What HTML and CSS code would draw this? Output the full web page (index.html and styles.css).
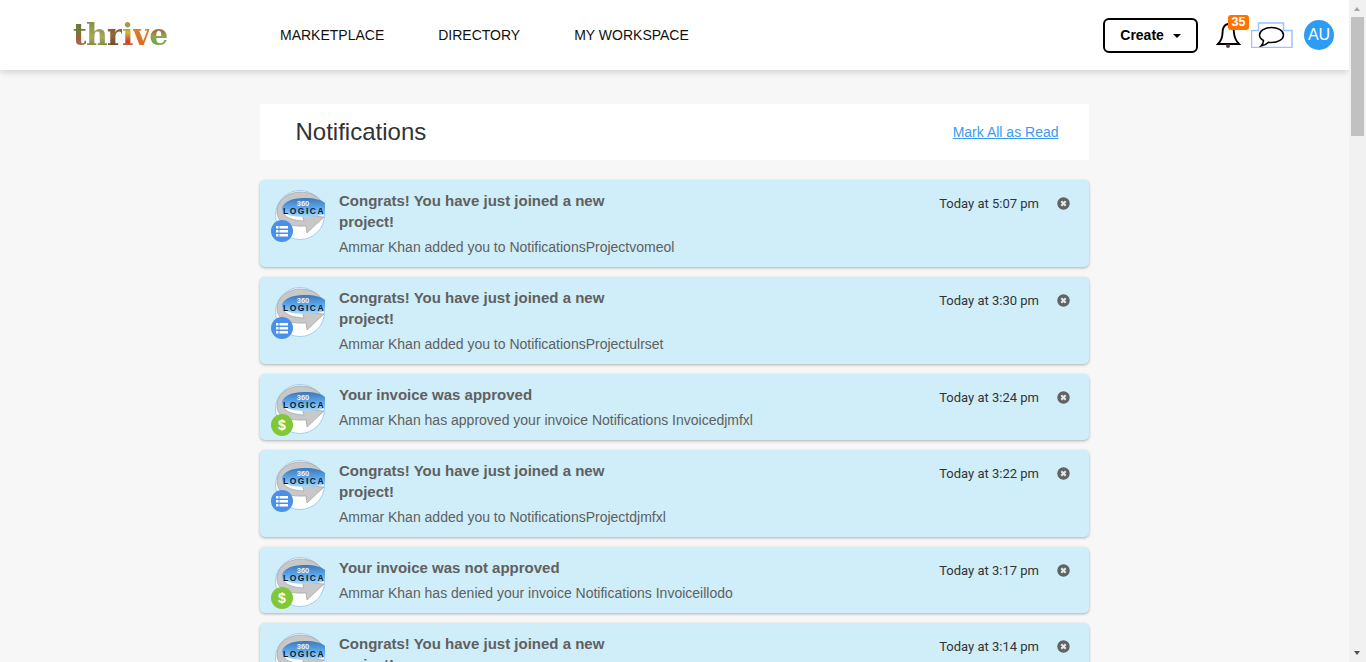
FILE: index.html
```html
<!DOCTYPE html>
<html lang="en">
<head>
    <meta charset="UTF-8">
    <title>Notifications</title>
    <link rel="stylesheet" href="styles.css">
</head>
<body>
    <svg class="sprites" width="0" height="0">
        <defs>
            <linearGradient id="logicaBlue" x1="0" y1="0" x2="0" y2="1">
                <stop offset="0" stop-color="#3a78bb"/>
                <stop offset="0.5" stop-color="#5aa6e8"/>
                <stop offset="1" stop-color="#a8daf9"/>
            </linearGradient>
        </defs>
        <symbol id="logica" viewBox="0 0 50 50">
            <circle cx="25" cy="25" r="24.500" fill="#fff" stroke="#9cc6f2" stroke-width="0.900"/>
            <path d="M2 22C2 11 11 3 24 2C34 2 42 5 47 12L30 10C17 10 9 14 8 20C8 26 14 30 29 31L27 25L49 27L32 43L31 36C14 37 2 33 2 22Z" fill="#c8c8c8" stroke="#8a8a8a" stroke-width="0.500"/>
            <path d="M7 18C8 12 17 8 29 8C40 8 47 10 50 13V24C45 26 38 27 29 27C17 27 7 24 7 18Z" fill="url(#logicaBlue)"/>
        </symbol>
        <symbol id="listIcon" viewBox="0 0 14 12">
            <rect x="1" y="1" width="2.500" height="2.500"/>
            <rect x="1" y="5" width="2.500" height="2.500"/>
            <rect x="1" y="9" width="2.500" height="2.500"/>
            <rect x="4.500" y="1" width="8.500" height="2.500"/>
            <rect x="4.500" y="5" width="8.500" height="2.500"/>
            <rect x="4.500" y="9" width="8.500" height="2.500"/>
        </symbol>
        <symbol id="closeIcon" viewBox="0 0 13 13">
            <circle cx="6.500" cy="6.500" r="6.200" fill="#626262"/>
            <path d="M4.300 4.300L8.700 8.700M8.700 4.300L4.300 8.700" stroke="#dfe9ee" stroke-width="2.200"/>
        </symbol>
    </svg>

    <div class="window">
        <div class="page">
            <header class="topbar">
                <div class="brand"><span class="l1">t</span><span class="l2">h</span><span class="l3">r</span><span class="l4">i</span><span class="l5">v</span><span class="l6">e</span></div>
                <nav class="main-nav">
                    <a>MARKETPLACE</a>
                    <a>DIRECTORY</a>
                    <a>MY WORKSPACE</a>
                </nav>
                <div class="top-actions">
                    <button class="create-btn">Create <span class="caret"></span></button>
                    <div class="bell">
                        <svg width="26" height="28" viewBox="0 0 26 28">
                            <path d="M12 3C7 4 6.500 8 6.500 12C6.500 17 5 20 2 23H23C20 20 18.500 17 18 12C18 8 17 4 12 3Z" fill="#fff" stroke="#000" stroke-width="1.900"/>
                            <circle cx="12" cy="25" r="2" fill="#5a4040"/>
                        </svg>
                        <span class="badge">35</span>
                    </div>
                    <div class="chat">
                        <svg width="42" height="26" viewBox="0 0 42 26">
                            <path d="M7.500 1H32.500V8.500H41V25.500H0.500V8.500H7.500Z" fill="none" stroke="#9cc2fb" stroke-width="1.500"/>
                            <path d="M20.500 5.500C14 5.500 8.500 8.500 8.500 13C8.500 15.500 10.500 17.500 12.500 18.500C12.500 20.500 11.500 22.500 10 24C13.500 23.500 16 22 17.500 20.300C18.500 20.500 19.500 20.500 20.500 20.500C27 20.500 32.500 17.500 32.500 13C32.500 8.500 27 5.500 20.500 5.500Z" fill="#fff" stroke="#000" stroke-width="1.500"/>
                        </svg>
                    </div>
                    <div class="user-chip">AU</div>
                </div>
            </header>

            <main class="content">
                <section class="title-bar">
                    <h1>Notifications</h1>
                    <a class="mark-read">Mark All as Read</a>
                </section>

                <ul class="notice-list">
                    <li class="notice">
                        <div class="thumb">
                            <svg class="avatar" viewBox="0 0 50 50"><use href="#logica"/><text x="28" y="16" class="logo-360">360</text><text x="29" y="24" class="logo-word">LOGICA</text></svg>
                            <span class="type-icon type-project"><svg width="14" height="12"><use href="#listIcon"/></svg></span>
                        </div>
                        <div class="notice-text">
                            <h3>Congrats! You have just joined a new project!</h3>
                            <p>Ammar Khan added you to NotificationsProjectvomeol</p>
                        </div>
                        <span class="notice-time">Today at 5:07 pm</span>
                        <svg class="close-x"><use href="#closeIcon"/></svg>
                    </li>
                    <li class="notice">
                        <div class="thumb">
                            <svg class="avatar" viewBox="0 0 50 50"><use href="#logica"/><text x="28" y="16" class="logo-360">360</text><text x="29" y="24" class="logo-word">LOGICA</text></svg>
                            <span class="type-icon type-project"><svg width="14" height="12"><use href="#listIcon"/></svg></span>
                        </div>
                        <div class="notice-text">
                            <h3>Congrats! You have just joined a new project!</h3>
                            <p>Ammar Khan added you to NotificationsProjectulrset</p>
                        </div>
                        <span class="notice-time">Today at 3:30 pm</span>
                        <svg class="close-x"><use href="#closeIcon"/></svg>
                    </li>
                    <li class="notice">
                        <div class="thumb">
                            <svg class="avatar" viewBox="0 0 50 50"><use href="#logica"/><text x="28" y="16" class="logo-360">360</text><text x="29" y="24" class="logo-word">LOGICA</text></svg>
                            <span class="type-icon type-invoice">$</span>
                        </div>
                        <div class="notice-text">
                            <h3>Your invoice was approved</h3>
                            <p>Ammar Khan has approved your invoice Notifications Invoicedjmfxl</p>
                        </div>
                        <span class="notice-time">Today at 3:24 pm</span>
                        <svg class="close-x"><use href="#closeIcon"/></svg>
                    </li>
                    <li class="notice">
                        <div class="thumb">
                            <svg class="avatar" viewBox="0 0 50 50"><use href="#logica"/><text x="28" y="16" class="logo-360">360</text><text x="29" y="24" class="logo-word">LOGICA</text></svg>
                            <span class="type-icon type-project"><svg width="14" height="12"><use href="#listIcon"/></svg></span>
                        </div>
                        <div class="notice-text">
                            <h3>Congrats! You have just joined a new project!</h3>
                            <p>Ammar Khan added you to NotificationsProjectdjmfxl</p>
                        </div>
                        <span class="notice-time">Today at 3:22 pm</span>
                        <svg class="close-x"><use href="#closeIcon"/></svg>
                    </li>
                    <li class="notice">
                        <div class="thumb">
                            <svg class="avatar" viewBox="0 0 50 50"><use href="#logica"/><text x="28" y="16" class="logo-360">360</text><text x="29" y="24" class="logo-word">LOGICA</text></svg>
                            <span class="type-icon type-invoice">$</span>
                        </div>
                        <div class="notice-text">
                            <h3>Your invoice was not approved</h3>
                            <p>Ammar Khan has denied your invoice Notifications Invoiceillodo</p>
                        </div>
                        <span class="notice-time">Today at 3:17 pm</span>
                        <svg class="close-x"><use href="#closeIcon"/></svg>
                    </li>
                    <li class="notice">
                        <div class="thumb">
                            <svg class="avatar" viewBox="0 0 50 50"><use href="#logica"/><text x="28" y="16" class="logo-360">360</text><text x="29" y="24" class="logo-word">LOGICA</text></svg>
                            <span class="type-icon type-project"><svg width="14" height="12"><use href="#listIcon"/></svg></span>
                        </div>
                        <div class="notice-text">
                            <h3>Congrats! You have just joined a new project!</h3>
                        </div>
                        <span class="notice-time">Today at 3:14 pm</span>
                        <svg class="close-x"><use href="#closeIcon"/></svg>
                    </li>
                </ul>
            </main>
        </div>

        <div class="scrollbar">
            <span class="arrow-up"></span>
            <div class="thumb-bar"></div>
            <span class="arrow-down"></span>
        </div>
    </div>
</body>
</html>
```

FILE: styles.css
```css
html, body {
    height: 100%;
}

body {
    font-family: "Liberation Sans", Arial, sans-serif;
    background-color: #f7f7f7;
    color: #606060;
    margin: 0;
    padding: 0;
    overflow: hidden;
}

.sprites {
    display: block;
    height: 0;
}

.window {
    display: flex;
    height: 662px;
}

.page {
    flex: 1;
    min-width: 0;
    overflow: hidden;
}

/* Top bar */
.topbar {
    display: flex;
    align-items: center;
    height: 70px;
    background-color: #fff;
    box-shadow: 0 1px 8px rgba(0, 0, 0, 0.2);
    padding: 0 15px 0 73px;
    box-sizing: border-box;
    position: relative;
}

.brand {
    width: 207px;
    font-family: "DejaVu Serif", serif;
    font-size: 30px;
    font-weight: bold;
    letter-spacing: -0.8px;
    line-height: 70px;
    white-space: nowrap;
    filter: blur(0.4px);
}

.brand span {
    background-clip: text;
    -webkit-background-clip: text;
    color: transparent;
}

.l1 { background-image: linear-gradient(#6f7a3a 40%, #a0603c 60%, #b5764e); }
.l2 { background-image: linear-gradient(#7f8a3c, #a3a85a 60%, #5f7030); }
.l3 { background-image: linear-gradient(#6c4a2a, #96683c, #4e3a22); }
.l4 { background-image: linear-gradient(#9aa04a 30%, #d0b838 45%, #c8402c 70%, #d4a030); }
.l5 { background-image: linear-gradient(#e88a30, #d8641c); }
.l6 { background-image: linear-gradient(#b83a34 25%, #86aa50 55%, #5f9a48); }

.main-nav {
    display: flex;
    gap: 54px;
}

.main-nav a {
    color: #111;
    font-size: 14px;
    cursor: pointer;
}

.top-actions {
    display: flex;
    align-items: center;
    margin-left: auto;
}

.create-btn {
    width: 95px;
    height: 35px;
    background-color: #fff;
    color: #000;
    border: 2px solid #000;
    border-radius: 6px;
    font-family: "Liberation Sans", Arial, sans-serif;
    font-size: 14px;
    font-weight: bold;
    padding: 0;
    cursor: pointer;
}

.caret {
    display: inline-block;
    width: 0;
    height: 0;
    margin-left: 5px;
    vertical-align: 2px;
    border-left: 4.500px solid transparent;
    border-right: 4.500px solid transparent;
    border-top: 4.500px solid #000;
}

.bell {
    position: relative;
    width: 26px;
    height: 28px;
    margin-left: 18px;
}

.badge {
    position: absolute;
    top: -6px;
    left: 12px;
    width: 21px;
    height: 15px;
    background-color: #ff7300;
    color: #fff;
    font-size: 12.500px;
    font-weight: bold;
    line-height: 15px;
    text-align: center;
    border-radius: 3px;
}

.chat {
    height: 26px;
    margin-left: 9px;
}

.user-chip {
    width: 30px;
    height: 30px;
    margin-left: 11px;
    background-color: #2d9cf4;
    color: #fff;
    border-radius: 50%;
    font-size: 16px;
    line-height: 30px;
    text-align: center;
}

/* Notifications */
.content {
    width: 829px;
    margin-left: 260px;
    padding-top: 34px;
}

.title-bar {
    display: flex;
    justify-content: space-between;
    align-items: center;
    height: 56px;
    background-color: #fff;
    padding: 0 30.500px 0 35.500px;
    margin-bottom: 20px;
}

.title-bar h1 {
    margin: 0;
    color: #333;
    font-size: 24px;
    font-weight: normal;
}

.mark-read {
    color: #3a9bf0;
    font-size: 14px;
    text-decoration: underline;
    cursor: pointer;
}

.notice-list {
    list-style-type: none;
    margin: 0;
    padding: 0;
}

.notice {
    display: flex;
    align-items: flex-start;
    background-color: #cfeef9;
    border-radius: 5px;
    box-shadow: 0 1px 3px rgba(0, 0, 0, 0.3);
    margin-bottom: 10px;
    padding: 10px 19px 9px 15px;
}

.thumb {
    position: relative;
    flex: none;
    width: 50px;
    height: 47px;
    margin-right: 14px;
}

.avatar {
    display: block;
    width: 50px;
    height: 50px;
}

.logo-360 {
    font-family: "Liberation Sans", Arial, sans-serif;
    font-size: 7.500px;
    font-weight: bold;
    fill: #edf3f8;
    text-anchor: middle;
}

.logo-word {
    font-family: "Liberation Sans", Arial, sans-serif;
    font-size: 8.500px;
    font-weight: bold;
    letter-spacing: 1.500px;
    fill: #0c1a30;
    text-anchor: middle;
}

.type-icon {
    position: absolute;
    left: -4px;
    top: 30px;
    display: flex;
    align-items: center;
    justify-content: center;
    width: 22px;
    height: 22px;
    border-radius: 50%;
    color: #fff;
    fill: #fff;
    font-size: 14px;
    font-weight: bold;
}

.type-project {
    background-color: #4a90e8;
}

.type-invoice {
    background-color: #80c837;
}

.notice-text {
    flex: 1;
    min-width: 0;
}

.notice-text h3 {
    max-width: 290px;
    margin: 0 0 5px;
    font-size: 15px;
    line-height: 21px;
    font-weight: bold;
}

.notice-text p {
    margin: 0;
    font-size: 14px;
    line-height: 21px;
}

.notice-time {
    color: #333;
    font-size: 13px;
    line-height: 26px;
    margin-top: 1px;
    font-family: Roboto, sans-serif;
}

.close-x {
    flex: none;
    width: 13px;
    height: 13px;
    margin: 7px 0 0 18px;
}

/* Scrollbar */
.scrollbar {
    flex: none;
    position: relative;
    width: 17px;
    background-color: #f1f1f1;
}

.thumb-bar {
    position: absolute;
    top: 17px;
    left: 2px;
    width: 13px;
    height: 119px;
    background-color: #c1c1c1;
}

.arrow-up, .arrow-down {
    position: absolute;
    left: 5px;
    width: 0;
    height: 0;
    border-left: 3.500px solid transparent;
    border-right: 3.500px solid transparent;
}

.arrow-up {
    top: 7px;
    border-bottom: 4px solid #a3a3a3;
}

.arrow-down {
    bottom: 7px;
    border-top: 4px solid #505050;
}
```
